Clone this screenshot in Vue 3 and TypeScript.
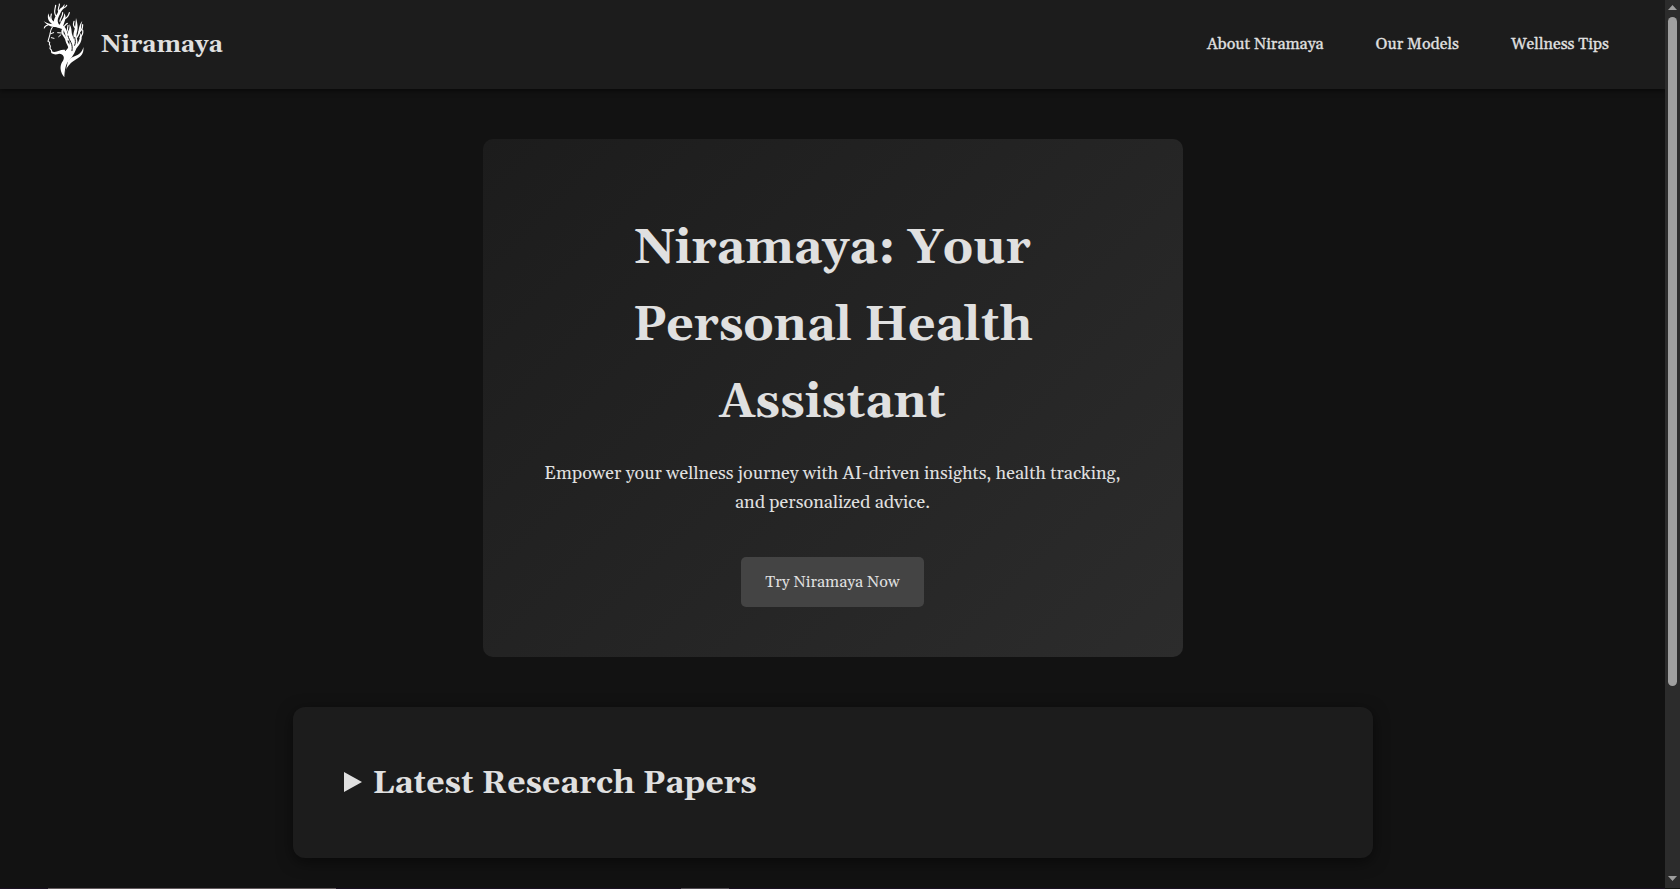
<script setup lang="ts">
interface NavItem {
  label: string
  href: string
}

const navItems: NavItem[] = [
  { label: 'About Niramaya', href: '#about' },
  { label: 'Our Models', href: '#models' },
  { label: 'Wellness Tips', href: '#tips' },
]
</script>

<template>
  <div class="page">
    <div class="content">
      <header class="header">
        <div class="brand">
          <svg class="logo" viewBox="0 0 144 240" aria-hidden="true">
            <g fill="#fff">
              <!-- left crown: tapered limbs -->
              <path d="M84 124C74 110 78 96 66 87C54 82 44 84 36 72C48 76 60 70 70 78C84 88 80 102 90 116Z" />
              <path d="M46 78C34 60 50 48 54 36C58 24 68 24 73 12C76 24 64 30 61 40C56 52 48 60 58 76Z" />
              <path d="M60 80C58 64 72 60 73 40C82 54 72 64 69 82Z" />
              <path d="M50 80C34 84 22 76 11 64C24 72 36 74 52 72Z" />
              <path d="M42 76C28 68 20 58 25 40C28 56 38 62 48 70Z" />
              <!-- right crown: tapered limbs -->
              <path d="M88 152C98 128 82 116 84 98C86 90 90 86 88 72C96 84 94 94 96 102C100 116 110 128 104 150Z" />
              <path d="M96 146C110 124 96 112 102 94C106 82 106 74 108 54C114 74 114 88 110 100C106 114 120 122 106 148Z" />
              <path d="M102 146C116 126 120 120 121 98C130 114 124 130 106 148Z" />
              <path d="M108 112C120 96 112 80 127 62C120 80 128 94 110 116Z" />
            </g>
            <g fill="none" stroke="#fff" stroke-linecap="round">
              <path stroke-width="3.5" d="M50 50C38 40 46 28 47 16M57 36C50 26 60 20 58 12M72 58C80 54 86 48 88 38M60 64C60 54 68 50 68 38" />
              <path stroke-width="3.5" d="M24 74C18 78 14 78 13 84M36 68C34 56 30 52 34 42M68 82C76 78 76 72 82 70M62 28C72 24 78 22 80 16" />
              <path stroke-width="3.5" d="M86 98C78 88 84 84 84 76M108 86C98 78 100 72 102 64M116 96C126 92 128 84 128 74M120 112C128 106 130 100 128 90" />
              <path stroke-width="6" d="M68 90C62 104 80 108 80 124C82 134 92 138 88 152" />
              <!-- face -->
              <path stroke-width="3.2" d="M37 82C29 90 32 102 28 110L24 124L29 127L28 133L31 138L30 146L34 150L36 158" />
              <path stroke-width="3" d="M32 101L41 98M34 113L42 115M53 98L64 99M56 110L63 104" />
            </g>
            <g fill="#fff">
              <path d="M33 153C50 162 60 146 76 150C86 148 90 132 88 120L112 134C108 152 100 168 86 182C76 194 74 212 73 232C60 216 58 198 68 184C76 172 70 162 58 161C48 164 42 164 35 160Z" />
              <path d="M84 182C100 164 124 170 130 141C134 172 106 176 92 190C82 200 77 208 76 220Z" />
            </g>
            <g fill="none" stroke="#1c1c1c" stroke-linecap="round" stroke-width="3">
              <path d="M84 108C88 124 100 130 96 152M74 132C82 140 82 146 76 152M104 112C106 122 108 126 104 136" />
            </g>
          </svg>
          <span class="brand-name">Niramaya</span>
        </div>
        <nav class="nav">
          <a v-for="item in navItems" :key="item.label" :href="item.href">{{ item.label }}</a>
        </nav>
      </header>

      <main class="main">
        <section class="hero">
          <h1>Niramaya: Your Personal Health Assistant</h1>
          <p>Empower your wellness journey with AI-driven insights, health tracking, and personalized advice.</p>
          <button class="cta" type="button">Try Niramaya Now</button>
        </section>

        <section class="papers">
          <h2>
            <svg class="marker" viewBox="0 0 18 20" aria-hidden="true"><path d="M0 0L18 10L0 20Z" /></svg>
            Latest Research Papers
          </h2>
        </section>
      </main>

      <div class="bottom-edge">
        <i class="segment segment-long"></i>
        <i class="segment segment-short"></i>
      </div>
    </div>

    <div class="scrollbar" aria-hidden="true">
      <svg class="arrow" viewBox="0 0 9 5"><path d="M4.5 0L9 5H0Z" /></svg>
      <div class="thumb"></div>
      <svg class="arrow arrow-down" viewBox="0 0 9 5"><path d="M0 0H9L4.5 5Z" /></svg>
    </div>
  </div>
</template>

<style>
body {
  background: #121212;
  overflow: hidden;
}
</style>

<style scoped>
.page {
  display: flex;
  height: 889px;
  overflow: hidden;
  background: #121212;
  color: #e0e0e0;
  font-family: Gelasio, Georgia, "Liberation Serif", serif;
  line-height: 1.6;
}

.content {
  display: flex;
  flex-direction: column;
  width: 1665px;
}

.header {
  display: flex;
  flex: none;
  align-items: center;
  justify-content: space-between;
  box-sizing: border-box;
  height: 89px;
  padding: 0 56px 0 40px;
  background: #1c1c1c;
  box-shadow: 0 2px 5px rgba(0, 0, 0, 0.5);
}

.brand {
  display: flex;
  align-items: center;
  gap: 13px;
}

.logo {
  width: 48px;
  height: 80px;
  margin-bottom: 9px;
}

.brand-name {
  padding-top: 2px;
  font-size: 24px;
  font-weight: 700;
}

.nav {
  display: flex;
  gap: 52px;
}

.nav a {
  color: #e0e0e0;
  font-size: 16px;
  text-decoration: none;
  -webkit-text-stroke: 0.3px #e0e0e0;
}

.main {
  display: flex;
  flex: 1;
  flex-direction: column;
  align-items: center;
  gap: 50px;
  padding-top: 50px;
}

.hero {
  box-sizing: border-box;
  width: 700px;
  height: 518px;
  padding: 71px 50px 50px;
  border-radius: 10px;
  background: linear-gradient(135deg, #1c1c1c, #2c2c2c);
  text-align: center;
}

.hero h1 {
  width: 500px;
  margin: 0 auto 19px;
  font-size: 48px;
  line-height: 77px;
}

.hero p {
  margin: 0 0 39px;
  font-size: 18px;
}

.cta {
  width: 183px;
  height: 50px;
  padding: 0;
  border: 0;
  border-radius: 5px;
  background: #444;
  color: #e0e0e0;
  font-family: inherit;
  font-size: 16px;
}

.papers {
  display: flex;
  align-items: center;
  box-sizing: border-box;
  width: 1080px;
  height: 151px;
  padding: 2px 51px 0;
  border-radius: 12px;
  background: #1c1c1c;
  box-shadow: 0 4px 15px rgba(0, 0, 0, 0.5);
}

.papers h2 {
  display: flex;
  align-items: center;
  gap: 11px;
  margin: 0;
  font-size: 32px;
}

.marker {
  width: 18px;
  height: 20px;
  margin-bottom: 4px;
  fill: #e0e0e0;
}

.bottom-edge {
  display: flex;
  flex: none;
  gap: 345px;
  height: 1px;
  padding-left: 48px;
  background: #1b1122;
}

.segment {
  height: 1px;
  background: #625a5e;
}

.segment-long {
  width: 288px;
}

.segment-short {
  width: 48px;
  background: #504a52;
}

.scrollbar {
  display: flex;
  flex-direction: column;
  align-items: center;
  box-sizing: border-box;
  width: 15px;
  height: 888px;
  padding: 5px 0 7px;
  background: #2c2c2c;
}

.arrow {
  width: 9px;
  height: 5px;
  fill: #9f9f9f;
}

.arrow-down {
  margin-top: auto;
}

.thumb {
  width: 9px;
  height: 669px;
  margin-top: 7px;
  border-radius: 5px;
  background: #9f9f9f;
}
</style>
